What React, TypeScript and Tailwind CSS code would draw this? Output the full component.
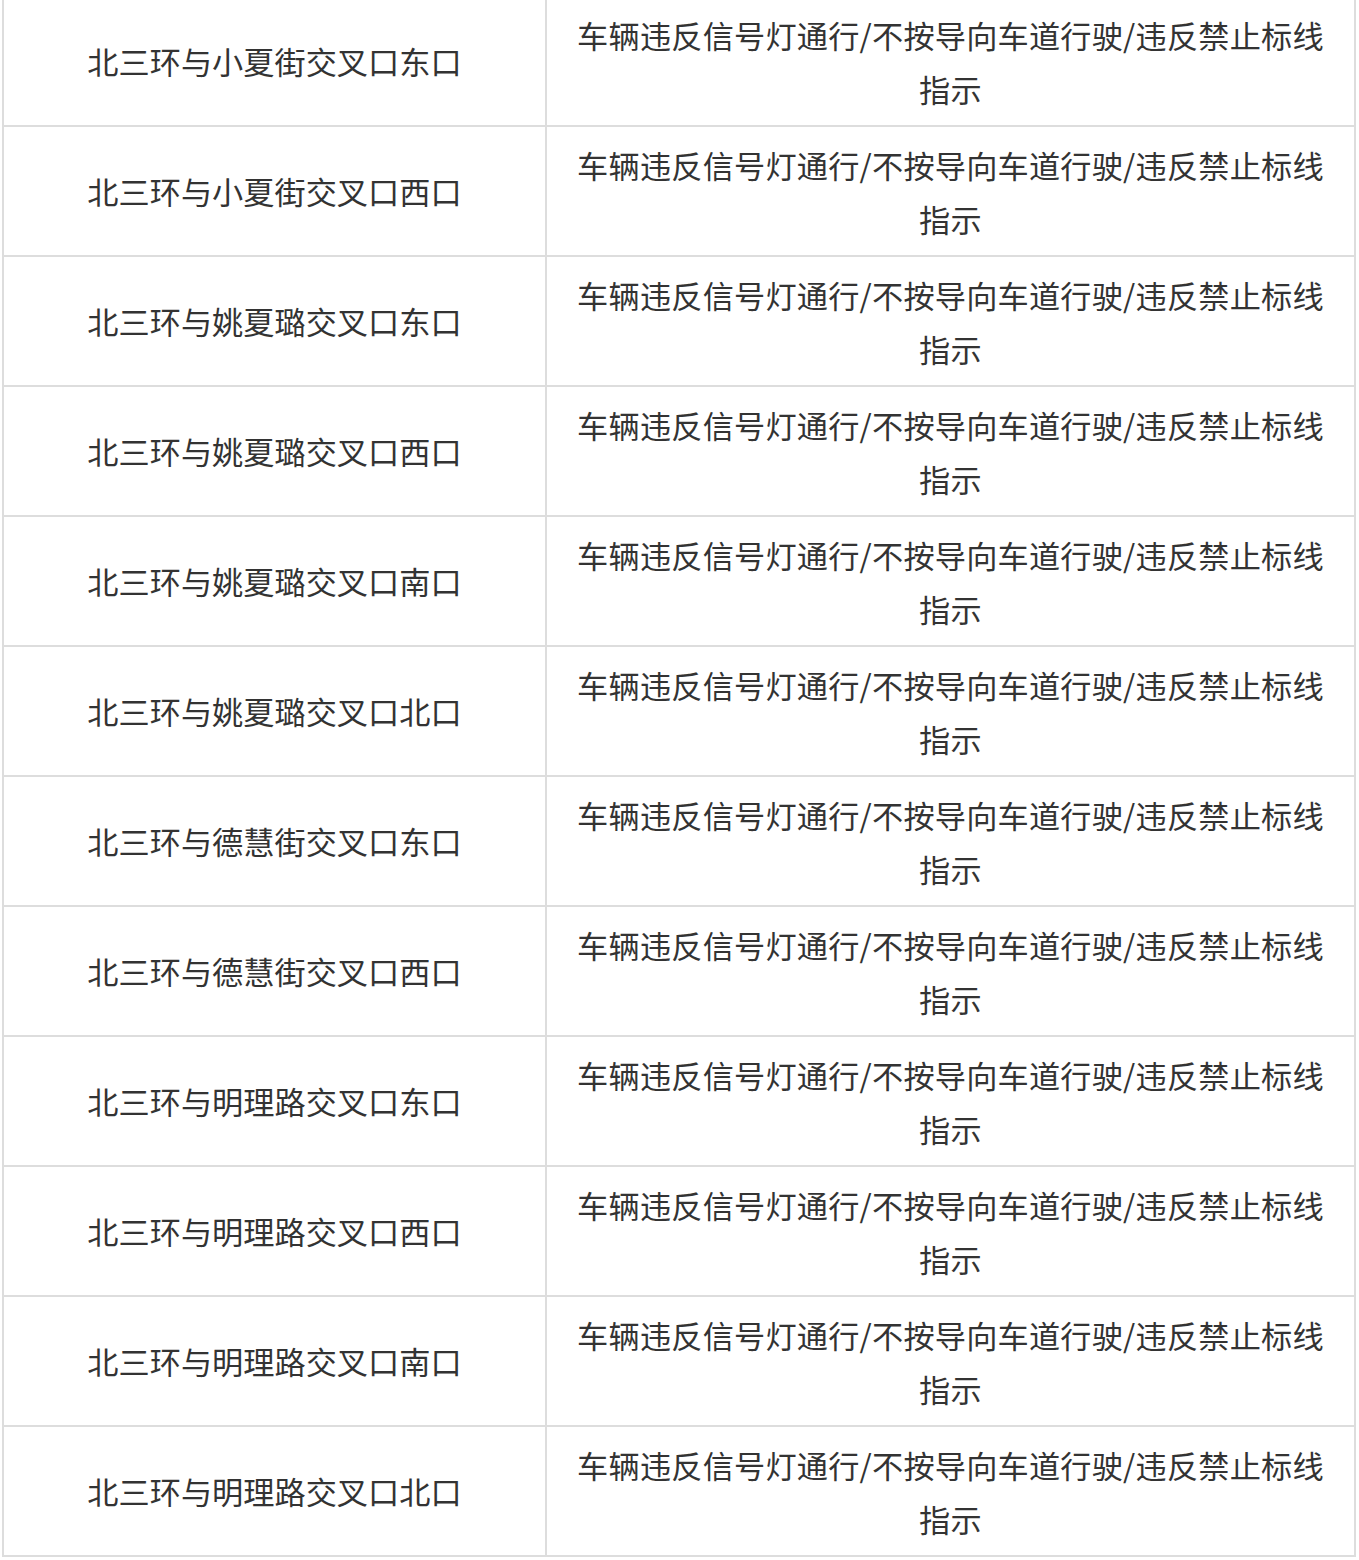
const locations = [
  '北三环与小夏街交叉口东口',
  '北三环与小夏街交叉口西口',
  '北三环与姚夏璐交叉口东口',
  '北三环与姚夏璐交叉口西口',
  '北三环与姚夏璐交叉口南口',
  '北三环与姚夏璐交叉口北口',
  '北三环与德慧街交叉口东口',
  '北三环与德慧街交叉口西口',
  '北三环与明理路交叉口东口',
  '北三环与明理路交叉口西口',
  '北三环与明理路交叉口南口',
  '北三环与明理路交叉口北口',
];

const violation = '车辆违反信号灯通行/不按导向车道行驶/违反禁止标线指示';

export default function App() {
  return (
    <div
      className="min-h-screen overflow-hidden bg-white text-[#333]"
      style={{ fontFamily: '"Noto Sans CJK SC", "Noto Sans", sans-serif' }}
    >
      {/* Table, scrolled a few pixels past the top */}
      <div className="-mt-[5px] ml-[2px] w-[1354px] border-l-2 border-t-2 border-[#dddddd]">
        {locations.map((name) => (
          <div key={name} className="grid h-[130px] grid-cols-[543px_809px]">
            <div className="flex items-center justify-center border-b-2 border-r-2 border-[#dddddd] text-[31.2px] leading-[54px]">
              {name}
            </div>
            <div className="flex items-center justify-center border-b-2 border-r-2 border-[#dddddd] px-4 pt-[2px] text-center text-[31.2px] leading-[54px] tracking-[0.2px]">
              {violation}
            </div>
          </div>
        ))}
      </div>
    </div>
  );
}
